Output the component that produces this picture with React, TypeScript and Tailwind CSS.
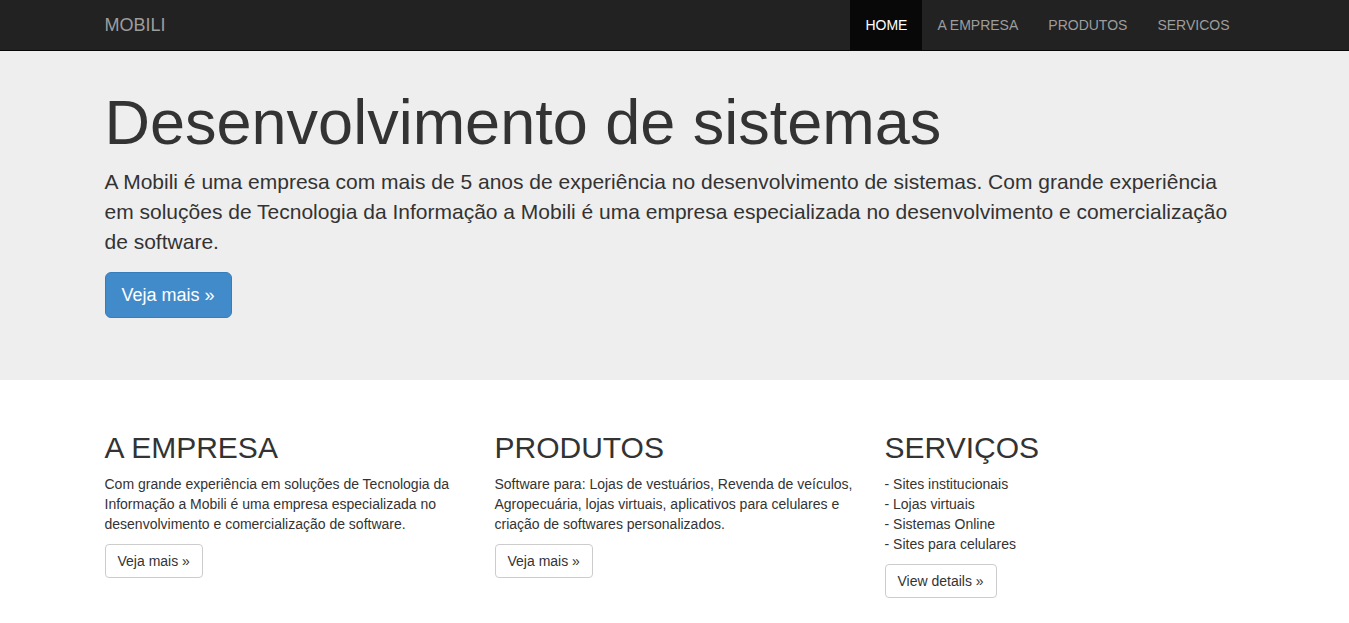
import React from "react";

const font = { fontFamily: '"Liberation Sans", Arial, Helvetica, sans-serif' };

function Column({
  title,
  children,
  action,
}: {
  title: string;
  children: React.ReactNode;
  action: string;
}) {
  return (
    <div className="w-[390px] px-[15px]">
      <h2 className="mt-[20px] mb-[10px] text-[30px] leading-[1.1] text-[#333]">{title}</h2>
      <p className="mb-[10px] text-[14px] leading-[20px] text-[#333]">{children}</p>
      <p className="mb-[10px]">
        <a
          href="#"
          className="inline-block rounded-[4px] border border-[#ccc] bg-white px-[12px] py-[6px] text-[14px] leading-[20px] text-[#333]"
        >
          {action}
        </a>
      </p>
    </div>
  );
}

export default function App() {
  const links = ["HOME", "A EMPRESA", "PRODUTOS", "SERVICOS"];
  return (
    <div className="min-h-screen bg-white" style={font}>
      <nav className="h-[51px] border-b border-[#080808] bg-[#222]">
        <div className="mx-auto flex w-[1170px] items-center justify-between px-[15px]">
          <a href="#" className="-ml-[15px] block px-[15px] py-[15px] text-[18px] leading-[20px] text-[#9d9d9d]">
            MOBILI
          </a>
          <ul className="flex">
            {links.map((l, i) => (
              <li key={l}>
                <a
                  href="#"
                  className={
                    i === 0
                      ? "block bg-[#080808] px-[15px] py-[15px] text-[14px] leading-[20px] text-white"
                      : "block px-[15px] py-[15px] text-[14px] leading-[20px] text-[#9d9d9d]"
                  }
                >
                  {l}
                </a>
              </li>
            ))}
          </ul>
        </div>
      </nav>

      <div className="bg-[#eee] pt-[37px] pb-[47px]">
        <div className="mx-auto w-[1170px] px-[15px] text-[#333]">
          <h1 className="mb-[10px] text-[63px] leading-[1.1]">Desenvolvimento de sistemas</h1>
          <p className="mb-[15px] text-[21px] leading-[30px]">
            A Mobili é uma empresa com mais de 5 anos de experiência no desenvolvimento de sistemas. Com grande
            experiência em soluções de Tecnologia da Informação a Mobili é uma empresa especializada no
            desenvolvimento e comercialização de software.
          </p>
          <p className="mb-[15px] leading-[46px]">
            <a
              href="#"
              className="inline-block rounded-[6px] border border-[#357ebd] bg-[#428bca] px-[16px] py-[10px] align-top text-[18px] leading-[24px] text-white"
            >
              Veja mais »
            </a>
          </p>
        </div>
      </div>

      <div className="mx-auto mt-[31px] w-[1170px] px-[15px]">
        <div className="-mx-[15px] flex">
          <Column title="A EMPRESA" action="Veja mais »">
            Com grande experiência em soluções de Tecnologia da Informação a Mobili é uma empresa especializada no
            desenvolvimento e comercialização de software.
          </Column>
          <Column title="PRODUTOS" action="Veja mais »">
            Software para: Lojas de vestuários, Revenda de veículos, Agropecuária, lojas virtuais, aplicativos para
            celulares e criação de softwares personalizados.
          </Column>
          <Column title="SERVIÇOS" action="View details »">
            - Sites institucionais
            <br />- Lojas virtuais
            <br />- Sistemas Online
            <br />- Sites para celulares
          </Column>
        </div>
      </div>
    </div>
  );
}
